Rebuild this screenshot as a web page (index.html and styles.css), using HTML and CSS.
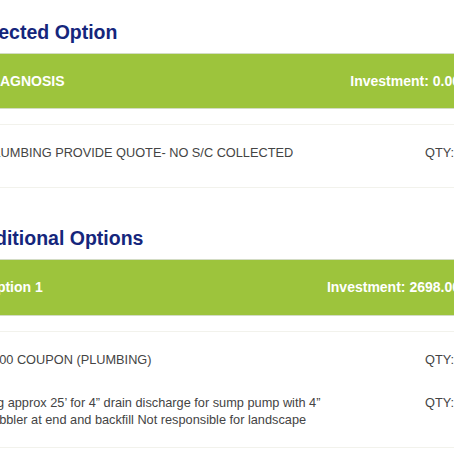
FILE: index.html
```html
<!DOCTYPE html>
<html>
<head>
<meta charset="utf-8">
<link rel="stylesheet" href="styles.css">
</head>
<body>
<div class="page">
  <section class="section">
    <h2 class="title">Selected Option</h2>
    <div class="bar">
      <span class="bar-name">DIAGNOSIS</span>
      <span class="bar-total">Investment: 0.00</span>
    </div>
    <div class="items items-single">
      <div class="item">
        <div class="desc">PLUMBING PROVIDE QUOTE- NO S/C COLLECTED</div>
        <div class="qty">QTY: 1</div>
      </div>
    </div>
  </section>
  <section class="section section-next">
    <h2 class="title">Additional Options</h2>
    <div class="bar">
      <span class="bar-name">Option 1</span>
      <span class="bar-total">Investment: 2698.00</span>
    </div>
    <div class="items">
      <div class="item">
        <div class="desc">$100 COUPON (PLUMBING)</div>
        <div class="qty">QTY: 1</div>
      </div>
      <div class="item">
        <div class="desc">Dig approx 25’ for 4” drain discharge for sump pump with 4” bubbler at end and backfill Not responsible for landscape</div>
        <div class="qty">QTY: 1</div>
      </div>
    </div>
  </section>
</div>
</body>
</html>
```
FILE: styles.css
```css
html, body {
  margin: 0;
  padding: 0;
  background: #ffffff;
  overflow: hidden;
}
body {
  width: 454px;
  height: 454px;
  font-family: "Liberation Sans", Arial, sans-serif;
}
.page {
  margin-left: -31px;
  width: 512px;
  padding-top: 20px;
}
.title {
  margin: 0 0 9px 0;
  font-size: 19.5px;
  line-height: 24px;
  font-weight: bold;
  color: #15267c;
}
.section-next {
  margin-top: 38px;
}
.bar {
  display: flex;
  justify-content: space-between;
  align-items: center;
  background: #9dc43c;
  border-top: 1px solid #d3dcc4;
  border-bottom: 1px solid #d3dcc4;
  padding: 18px 21px 18px 17px;
  color: #ffffff;
  font-size: 14px;
  line-height: 18px;
  font-weight: bold;
}
.section-next .bar {
  padding-bottom: 19px;
}
.items {
  margin-top: 15px;
  border-top: 1px solid #f2f2ec;
  border-bottom: 1px solid #f2f2ec;
  padding: 6px 16px 6px 16px;
  color: #444444;
  font-size: 12.75px;
  line-height: 17px;
}
.items-single {
  padding-top: 6px;
  padding-bottom: 13px;
}
.item {
  display: flex;
  padding: 13px 0;
}
.desc {
  flex: 0 1 355px;
}
.qty {
  margin-left: auto;
  width: 40px;
  white-space: nowrap;
}
```
